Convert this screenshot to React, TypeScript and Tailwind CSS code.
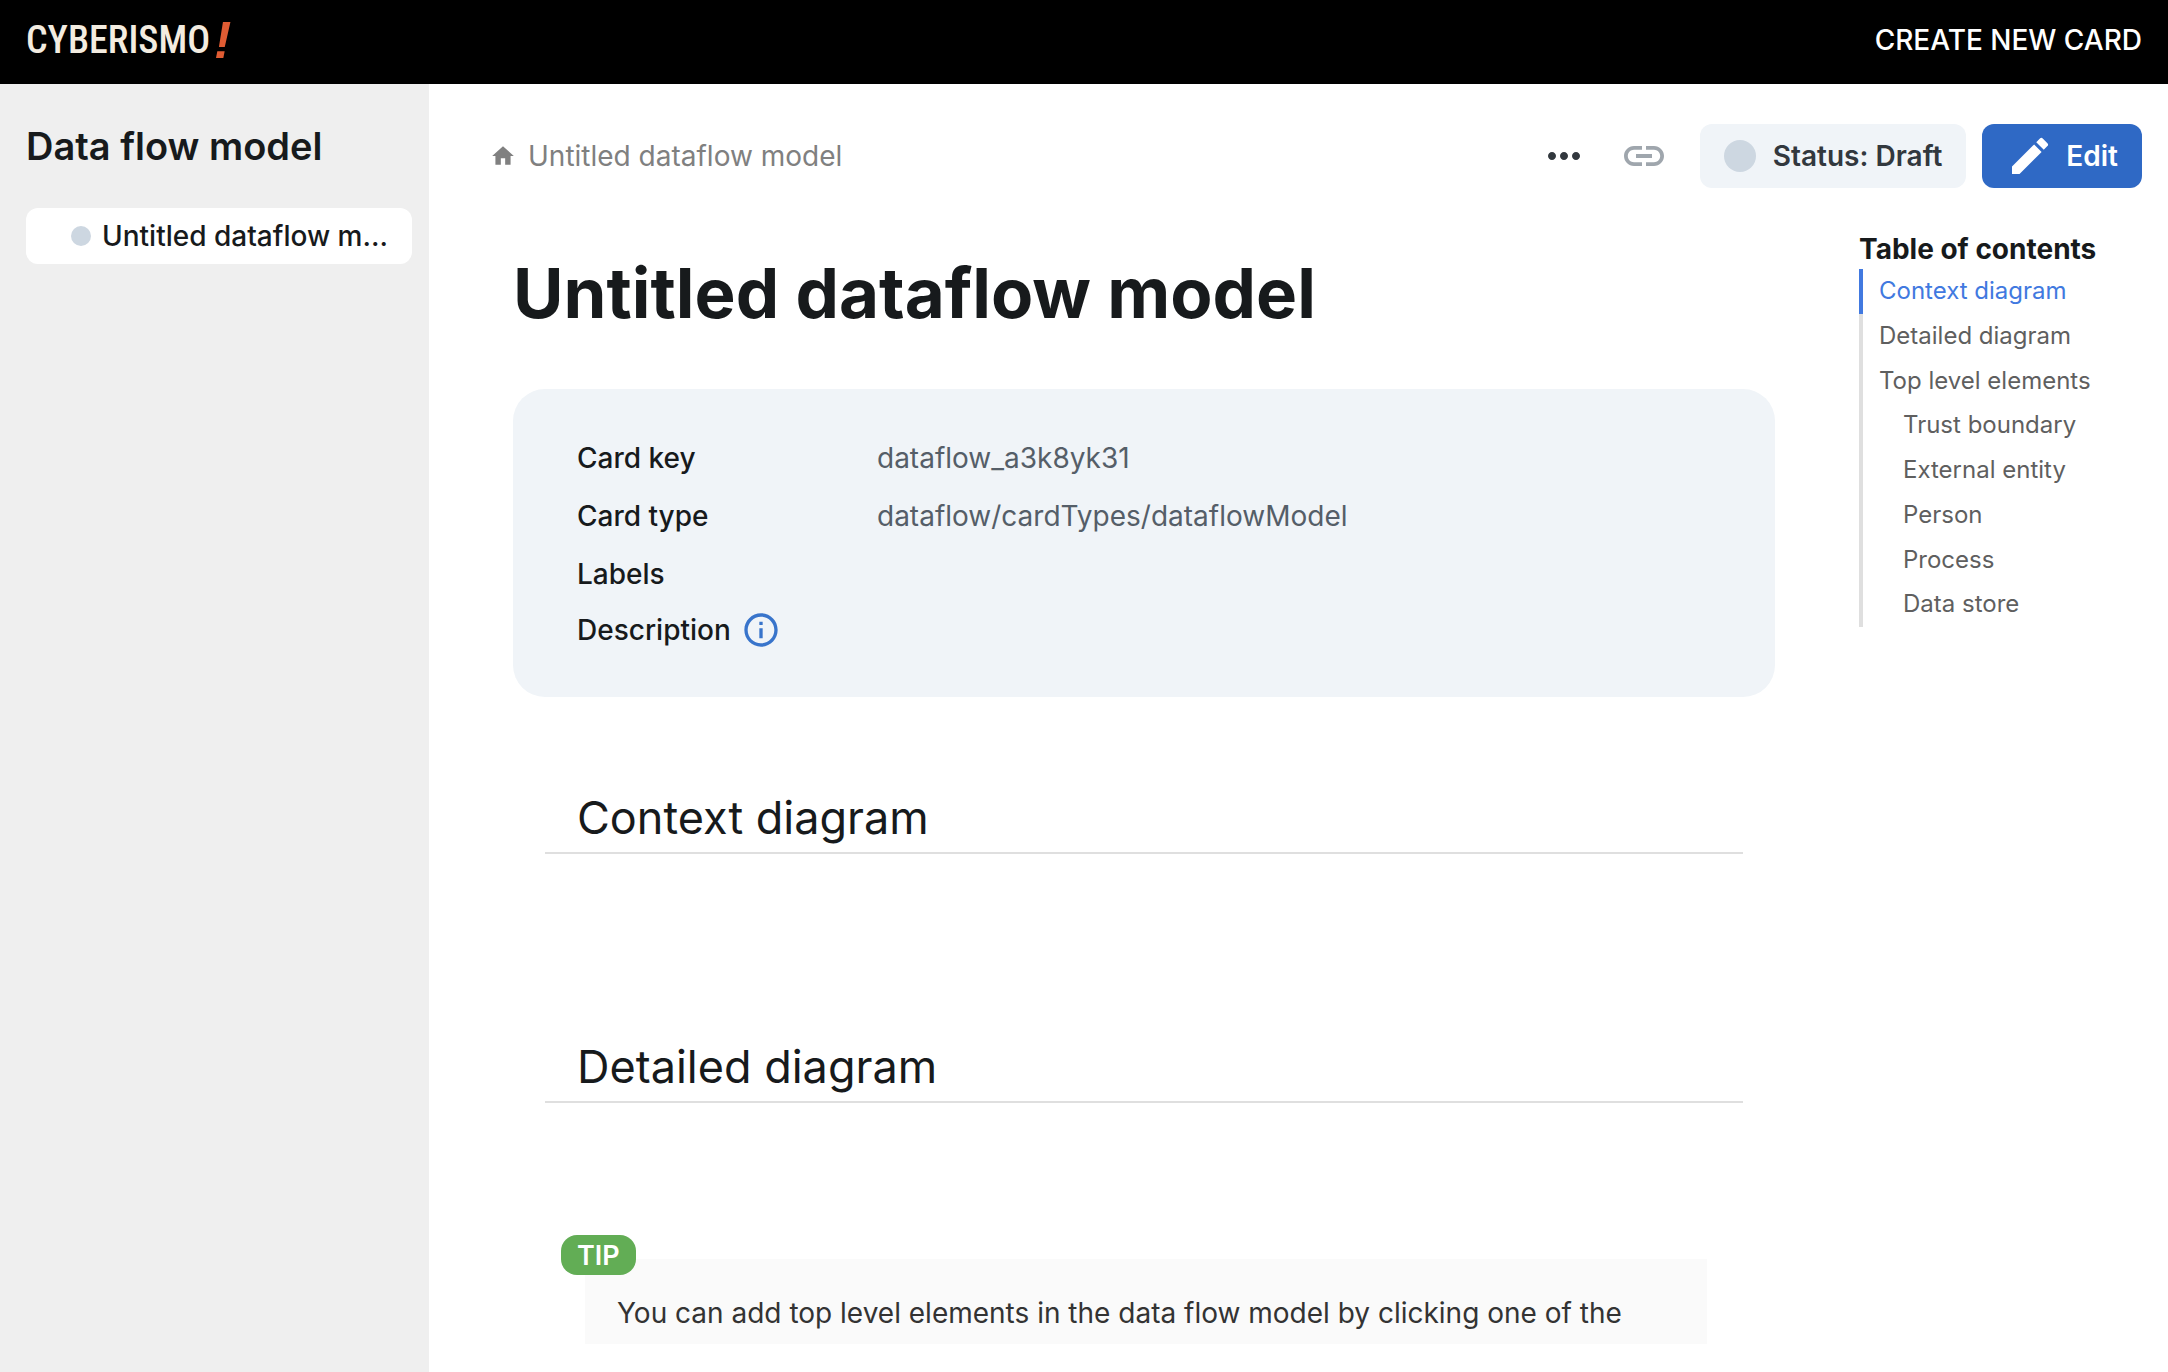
import { MdEdit, MdHome, MdInfoOutline, MdLink, MdMoreHoriz } from "react-icons/md";

type TocItem = { label: string; nested?: boolean; active?: boolean };

const toc: TocItem[] = [
  { label: "Context diagram", active: true },
  { label: "Detailed diagram" },
  { label: "Top level elements" },
  { label: "Trust boundary", nested: true },
  { label: "External entity", nested: true },
  { label: "Person", nested: true },
  { label: "Process", nested: true },
  { label: "Data store", nested: true },
];

const slug = (label: string) => "#" + label.toLowerCase().replaceAll(" ", "-");

function Header() {
  return (
    <header className="flex h-[84px] shrink-0 items-center justify-between bg-black px-[26px] pb-1">
      <a href="#" aria-label="Cyberismo" className="flex items-center gap-1">
        <span className="font-['Roboto_Condensed','Open_Sans_Condensed','DejaVu_Sans_Condensed',sans-serif] text-[38px] leading-none font-medium text-[#f3ece0]">
          CYBERISMO
        </span>
        <span className="font-['Liberation_Sans'] text-[52px] leading-none font-bold text-[#e05c33] italic">
          !
        </span>
      </a>
      <button type="button" className="text-[28px] leading-10 font-medium text-white">
        CREATE NEW CARD
      </button>
    </header>
  );
}

function Sidebar() {
  return (
    <nav aria-label="Cards" className="w-[429px] shrink-0 bg-[#efefef] pt-9 pr-[17px] pl-[26px]">
      <h2 className="text-[38px] leading-[52px] font-semibold text-[#171a1c]">Data flow model</h2>
      <a
        href="#"
        className="mt-9 flex h-14 items-center gap-[11px] rounded-xl bg-white pr-[22px] pl-[45px] text-[28px] font-medium text-[#171a1c]"
      >
        <span className="size-5 shrink-0 rounded-full bg-[#cdd7e1]" />
        <span className="truncate">Untitled dataflow model</span>
      </a>
    </nav>
  );
}

function Toolbar() {
  return (
    <div className="flex h-16 shrink-0 items-center">
      <a href="#" className="flex flex-1 items-center gap-3 text-[28px] text-[#808080]">
        <MdHome className="size-[26px]" />
        Untitled dataflow model
      </a>
      <button type="button" aria-label="More" className="text-[#32383e]">
        <MdMoreHoriz className="size-12" />
      </button>
      <button type="button" aria-label="Copy link" className="ml-8 text-[#9fa6ad]">
        <MdLink className="size-12" />
      </button>
      <button
        type="button"
        className="ml-8 flex h-16 items-center gap-[17px] rounded-xl bg-[#f0f4f8] px-6 text-[28px] font-semibold text-[#32383e]"
      >
        <span className="size-8 rounded-full bg-[#cdd7e1]" />
        Status: Draft
      </button>
      <button
        type="button"
        className="ml-4 flex h-16 items-center gap-3 rounded-xl bg-[#2f69c5] px-6 text-[28px] font-semibold text-white"
      >
        <MdEdit className="size-12" />
        Edit
      </button>
    </div>
  );
}

function Field({ label, value, info }: { label: string; value?: string; info?: boolean }) {
  return (
    <div className="flex h-[58px] items-center text-[28px] last:h-[54px]">
      <dt className="flex w-[300px] shrink-0 items-center gap-2.5 font-medium text-[#171a1c]">
        {label}
        {info && <MdInfoOutline className="size-10 text-[#3874cb]" />}
      </dt>
      <dd className="text-[#555e68]">{value}</dd>
    </div>
  );
}

function Section({ title }: { title: string }) {
  return (
    <section className="mx-8">
      <h2 className="h-[72px] border-b-2 border-[#dfdfdf] px-8 text-[45px] leading-[72px] text-[#171a1c]">
        {title}
      </h2>
    </section>
  );
}

function Article() {
  return (
    <article className="min-h-0 min-w-0 flex-1 overflow-hidden pr-[84px] pl-[23px]">
      <h1 className="mt-[57px] text-[69px] leading-[96px] font-bold text-[#171a1c]">
        Untitled dataflow model
      </h1>
      <dl className="mt-12 rounded-[32px] bg-[#f0f4f8] px-16 py-10">
        <Field label="Card key" value="dataflow_a3k8yk31" />
        <Field label="Card type" value="dataflow/cardTypes/dataflowModel" />
        <Field label="Labels" />
        <Field label="Description" info />
      </dl>
      <div className="mt-[85px] flex flex-col gap-[177px]">
        <Section title="Context diagram" />
        <Section title="Detailed diagram" />
      </div>
      <aside className="relative mt-[156px] mr-[68px] ml-[72px] bg-[#fafafa] px-8 py-8 text-[28px] leading-[45px] text-[#333333]">
        <span className="absolute -top-6 -left-6 flex h-10 items-center rounded-2xl bg-[#62ad55] px-4 text-[27px] font-semibold text-white">
          TIP
        </span>
        <p>You can add top level elements in the data flow model by clicking one of the</p>
      </aside>
    </article>
  );
}

function TableOfContents() {
  return (
    <nav aria-label="Table of contents" className="w-[283px] shrink-0 pt-[42px]">
      <h2 className="text-[28px] leading-[39px] font-bold text-[#171a1c]">Table of contents</h2>
      <ul className="grid h-[358px] auto-rows-fr">
        {toc.map(({ label, nested, active }) => (
          <li
            key={label}
            className={active ? "border-l-4 border-[#4179e0]" : "border-l-4 border-[#dfdfdf]"}
          >
            <a
              href={slug(label)}
              className={
                "block text-[24px] leading-[43px] " +
                (nested ? "pl-10 " : "pl-4 ") +
                (active ? "text-[#4179e0]" : "text-[#5f5f5f]")
              }
            >
              {label}
            </a>
          </li>
        ))}
      </ul>
    </nav>
  );
}

export default function App() {
  return (
    <div className="flex h-screen flex-col bg-white font-[Inter,sans-serif]">
      <Header />
      <div className="flex min-h-0 flex-1">
        <Sidebar />
        <main className="flex min-w-0 flex-1 flex-col pt-10 pr-[26px] pb-7 pl-[61px]">
          <Toolbar />
          <div className="flex min-h-0 flex-1">
            <Article />
            <TableOfContents />
          </div>
        </main>
      </div>
    </div>
  );
}
